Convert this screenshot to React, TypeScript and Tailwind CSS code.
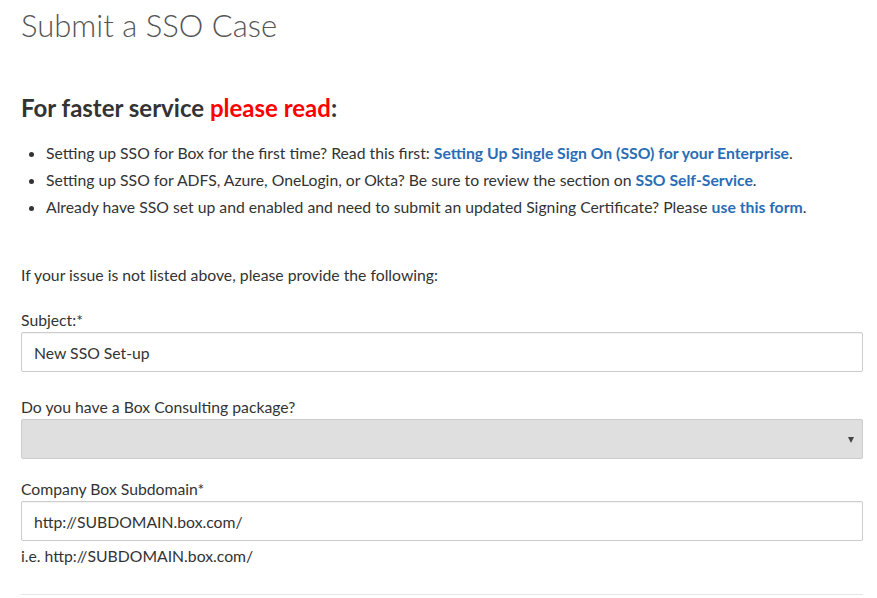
import { useState } from "react";

const links = {
  setup: "Setting Up Single Sign On (SSO) for your Enterprise",
  selfService: "SSO Self-Service",
  form: "use this form",
};

function Label({ text, className = "" }: { text: string; className?: string }) {
  return <label className={`block text-[15.75px] leading-[25px] text-[#333] ${className}`}>{text}</label>;
}

export default function App() {
  const [subject, setSubject] = useState("New SSO Set-up");
  const [subdomain, setSubdomain] = useState("http://SUBDOMAIN.box.com/");

  return (
    <div className="min-h-screen bg-white pl-[21px] pr-[15px] font-['Lato',sans-serif] text-[#333]">
      <h1 className="pt-[5px] text-[31px] font-light leading-[40px] text-[#555]">Submit a SSO Case</h1>

      <h2 className="mt-[47px] text-[24px] font-bold leading-[32px] text-[#333]">
        For faster service <span className="text-[#ff0000]">please read</span>:
      </h2>

      <ul className="mt-[15px] list-disc pl-[25px] text-[15.75px] leading-[27px]">
        <li>
          Setting up SSO for Box for the first time? Read this first:{" "}
          <a href="#" className="font-bold text-[#2a6db5]">{links.setup}</a>.
        </li>
        <li>
          Setting up SSO for ADFS, Azure, OneLogin, or Okta? Be sure to review the section on{" "}
          <a href="#" className="font-bold text-[#2a6db5]">{links.selfService}</a>.
        </li>
        <li>
          Already have SSO set up and enabled and need to submit an updated Signing Certificate? Please{" "}
          <a href="#" className="font-bold text-[#2a6db5]">{links.form}</a>.
        </li>
      </ul>

      <p className="mt-[41px] text-[15.75px] leading-[27px]">If your issue is not listed above, please provide the following:</p>

      <form className="w-[842px]" onSubmit={(e) => e.preventDefault()}>
        <Label text="Subject:*" className="mt-[19px]" />
        <input
          value={subject}
          onChange={(e) => setSubject(e.target.value)}
          className="block h-[40px] w-full rounded-[2px] border border-[#ccc] px-[12px] text-[15.75px] text-[#333] shadow-[inset_0_1px_1px_rgba(0,0,0,0.05)] outline-none"
        />

        <Label text="Do you have a Box Consulting package?" className="mt-[22px]" />
        <div className="relative h-[40px] w-full rounded-[2px] border border-[#ccc] bg-[#dfdfdf]">
          <svg className="absolute right-[8px] top-[17px]" width="6" height="6" viewBox="0 0 6 6">
            <path d="M0 0h6L3 6z" fill="#444" />
          </svg>
        </div>

        <Label text="Company Box Subdomain*" className="mt-[17px]" />
        <input
          value={subdomain}
          onChange={(e) => setSubdomain(e.target.value)}
          className="block h-[40px] w-full rounded-[2px] border border-[#ccc] px-[12px] text-[15.75px] text-[#333] shadow-[inset_0_1px_1px_rgba(0,0,0,0.05)] outline-none"
        />
        <p className="mt-[2px] text-[15.75px] leading-[25px]">i.e. http://SUBDOMAIN.box.com/</p>

        <hr className="mt-[26px] border-t border-[#e5e5e5]" />
      </form>
    </div>
  );
}
